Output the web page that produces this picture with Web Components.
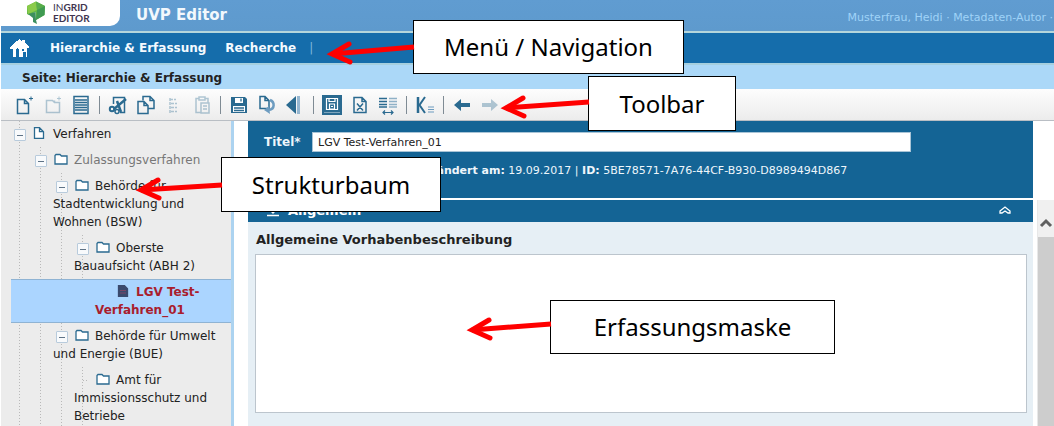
<!DOCTYPE html>
<html lang="de">
<head>
<meta charset="utf-8">
<title>UVP Editor</title>
<style>
  html, body { margin: 0; }
  body { font: 12px/18px "DejaVu Sans", Verdana, sans-serif; color: #222; background: #fff; }
</style>
</head>
<body>
<uvp-app></uvp-app>

<template id="t-app">
  <style>
    :host { display: block; position: relative; box-sizing: border-box; min-height: 100vh; padding-left: 1px; overflow: hidden; }
    .shell { display: flex; flex-direction: column; min-height: 100vh; }
    main { display: flex; flex: 1; }
    tree-panel { flex: none; width: 230px; }
    .splitter { flex: none; width: 14px; border-left: 3px solid #acd3f0; background: #fff; }
    form-panel { flex: 1; min-width: 0; }
    call-out { position: absolute; }
    .c1 { left: 413px; top: 20px; width: 271px; height: 54px; }
    .c2 { left: 588px; top: 76px; width: 148px; height: 55px; }
    .c3 { left: 221px; top: 157px; width: 220px; height: 55px; }
    .c4 { left: 550px; top: 300px; width: 285px; height: 54px; }
  </style>
  <div class="shell">
    <app-header></app-header>
    <main-nav></main-nav>
    <page-title>Seite: Hierarchie &amp; Erfassung</page-title>
    <tool-bar></tool-bar>
    <main>
      <tree-panel>
        <tree-node depth="0" icon="doc" open>Verfahren
          <tree-node slot="kids" depth="1" icon="folder" open muted>Zulassungsverfahren
            <tree-node slot="kids" depth="2" icon="folder" open>Behörde für Stadtentwicklung und Wohnen (BSW)
              <tree-node slot="kids" depth="3" icon="folder" open>Oberste Bauaufsicht (ABH 2)
                <tree-node slot="kids" depth="4" icon="file" selected>LGV Test-Verfahren_01</tree-node>
              </tree-node>
            </tree-node>
            <tree-node slot="kids" depth="2" icon="folder" open>Behörde für Umwelt und Energie (BUE)
              <tree-node slot="kids" depth="3" icon="folder">Amt für Immissionsschutz und Betriebe</tree-node>
            </tree-node>
          </tree-node>
        </tree-node>
      </tree-panel>
      <div class="splitter"></div>
      <form-panel></form-panel>
    </main>
  </div>
  <call-out class="c1" reach="86" from="26" to="33">Menü / Navigation</call-out>
  <call-out class="c2" reach="87" from="25" to="31">Toolbar</call-out>
  <call-out class="c3" reach="85" from="27" to="32">Strukturbaum</call-out>
  <call-out class="c4" reach="83" from="23" to="29">Erfassungsmaske</call-out>
</template>

<template id="t-header">
  <style>
    :host { display: flex; height: 31px; background: linear-gradient(#609cd1, #5e9acd); border-bottom: 2px solid #b4d6dc; }
    .logo { display: flex; flex: none; gap: 7px; box-sizing: border-box; width: 119px; height: 26px; padding-left: 25px; background: #fff; border-bottom-right-radius: 10px; }
    .logo p { margin: 2px 0 0; font: bold 10px/11px Lato, sans-serif; color: #41344f; }
    .logo i { font-style: normal; font-weight: 400; }
    h1 { flex: 1; margin: 0 0 0 16px; font-size: 15px; line-height: 31px; color: #f2f8fd; }
    .user { margin-right: 1px; padding-top: 9px; font-size: 11px; color: #9fd3f8; white-space: nowrap; }
  </style>
  <div class="logo">
    <svg width="20" height="26" viewBox="0 0 20 26" aria-hidden="true">
      <path d="M1 6 10 1.500 19 6 18.500 15 10 20 9.500 12 3 15 1 14Z" fill="#63b946"/>
      <path d="M1 6 10 1.500 11 10 2 14Z" fill="#8acb4a"/>
      <path d="M10 1.500 19 6 11 10Z" fill="#58ad4b"/>
      <path d="M19 6 18.500 15 10 20 11 10Z" fill="#3f9a52"/>
      <path d="M2 14 9.500 12 10 20 11 24 7 22 7 18Z" fill="#3c8f5f"/>
    </svg>
    <p><i>IN</i>GRID<br>EDITOR</p>
  </div>
  <h1>UVP Editor</h1>
  <div class="user">Musterfrau, Heidi · Metadaten-Autor ·</div>
</template>

<template id="t-nav">
  <style>
    :host { display: block; background: #156dab; border-bottom: 2px solid #a5cfdf; }
    nav { display: flex; align-items: center; height: 30px; padding-left: 9px; }
    a { color: #f4faff; font-weight: bold; text-decoration: none; margin-right: 19px; }
    a svg { display: block; }
    span { color: #7fb5dd; margin-left: -6px; }
  </style>
  <nav aria-label="Hauptmenü">
    <a href="#start" aria-label="Startseite"><svg width="21" height="20" viewBox="0 0 21 20" shape-rendering="crispEdges" fill="#fff"><path d="M0 9 7 3 10 1 11 3 13 2 15 2 15 5 19 9 19 10 17 10 17 19 9 19 9 12 7 10 6 12 6 19 3 19 3 11 0 11Z"/><path d="M12 11h2v2h-2zM13 14h3v5h-3z" fill="#156dab"/></svg></a>
    <a href="#hierarchie">Hierarchie &amp; Erfassung</a>
    <a href="#recherche">Recherche</a>
    <span>|</span>
  </nav>
</template>

<template id="t-title">
  <style>
    :host { display: block; height: 24px; padding-left: 21px; background: #abd8f8; color: #222; font-weight: bold; line-height: 26px; }
  </style>
  <slot></slot>
</template>

<template id="t-toolbar">
  <style>
    :host { display: flex; align-items: center; height: 31px; padding-left: 10px; background: linear-gradient(#fdfdfd, #ececec); border-bottom: 1px solid #b9bec4; }
    button { display: grid; place-items: center; flex: none; width: 28px; height: 28px; padding: 0; border: 0; background: none; }
    svg { width: 20px; height: 20px; fill: none; stroke: #2a6a90; stroke-width: 1.5; }
    i { flex: none; width: 1px; height: 18px; margin: 0 4px 0 4px; background: #7f8b94; }
    .off { opacity: .35; }
    .f { fill: #2a6a90; stroke: none; }
    .k { fill: #6d9cc0; stroke: none; }
    .w { fill: #fff; stroke: none; }
  </style>
  <button aria-label="Neu"><svg><path d="M2.500 4.500h7l4 4v10h-11zM9.500 4.500v4h4"/><path d="M14 3.500h4M16 1.500v4" stroke-width="1"/></svg></button>
  <button aria-label="Neuer Ordner" class="off" disabled><svg><path d="M3.500 5.500h6l2 2h5v10h-13zM11.500 5.500v2"/><path d="M14 3.500h4M16 1.500v4" stroke-width="1"/></svg></button>
  <button aria-label="Vorschau"><svg><path d="M3 1.500h14v17H3z"/><path d="M4 5h12M4 7.500h12M4 10h12M4 12.500h12M4 15h12" stroke-width="1.300"/></svg></button>
  <i></i>
  <button aria-label="Ausschneiden"><svg><path d="M5.500 9V2.500h11v15H12"/><path d="M18 4 6 14M9 6l4 11" stroke-width="2.500"/><circle cx="4" cy="14" r="2.200" stroke-width="2"/><circle cx="9" cy="16.500" r="2" stroke-width="1.500"/></svg></button>
  <button aria-label="Kopieren"><svg><path d="M7 5.500V1.500h7l4 4v8h-6M14 1.500v4h4"/><path d="M2 6.500h6l4 4v8H2zM8 6.500v4h4"/></svg></button>
  <button aria-label="Teilbaum kopieren" class="off" disabled><svg><path d="M6 3v15M6 4.500h6M7 8.500h6M7 12.500h6M7 16.500h6" stroke-dasharray="3 1"/></svg></button>
  <button aria-label="Einfügen" class="off" disabled><svg><path d="M7 3.500H4v14h5M13 3.500h3v4M7 2h6v3H7zM9 8h8v10H9zM11 11h4M11 14h4"/></svg></button>
  <i></i>
  <button aria-label="Speichern"><svg><path class="f" d="M2 2h14l2 2v14H2z"/><path class="w" d="M6 3h8v5H6zM4 11h12v6H4z"/><path d="M12 3.500v3M5 13h10M5 15.500h10" stroke-width="1.300"/></svg></button>
  <button aria-label="Rückgängig"><svg><path d="M3 1.500h5l4 4v8H3zM8 1.500v4h4"/><path d="M13 5c5 2 5 9-1 10" stroke="#6d9cc0" stroke-width="2.500"/><path class="k" d="m12 11-5 4 6 4z"/></svg></button>
  <button aria-label="Vergleichen"><svg><path class="f" d="M11 1v18L1 10z"/><path class="k" d="M12 1h3v18h-3z" opacity=".7"/></svg></button>
  <i></i>
  <button aria-label="Freigeben"><svg><path class="f" d="M0 0h20v20H0z"/><path d="M4.500 3.500h11v11h-11zM7 3.500v3h6v-3M7.500 9h5v5h-5zM9 11.500h2" stroke="#fff" stroke-width="1.200"/><path class="w" d="M2 17h16v1H2z" opacity=".4"/></svg></button>
  <button aria-label="Löschen"><svg><path d="M4 2.500h8l4 4v11H4zM12 2.500v4h4M7 8.500l6 7M13 8.500l-6 7"/></svg></button>
  <button aria-label="Änderungen vergleichen"><svg><path d="M1 3.500h8M1 6.500h8M1 9.500h8M1 12h8" stroke-width="1.500"/><path d="M11 3.500h8M11 6.500h8M11 9.500h8M11 12h8" stroke="#8fb1c7"/><path d="M5 17.500h10M7 15.500l-2 2 2 2M13 15.500l2 2-2 2" stroke-width="1.200"/></svg></button>
  <i></i>
  <button aria-label="Kommentar"><svg><path d="M3 2v16" stroke-width="2.500"/><path d="M10 2 4.500 10 10 18" stroke-width="2"/><path d="M13 12h6M13 14.500h6M13 17h6" stroke="#6d9cc0" stroke-width="1.200"/></svg></button>
  <i></i>
  <button aria-label="Zurück"><svg><path class="f" d="M2 10 9 4v4h9v4H9v4z"/></svg></button>
  <button aria-label="Vor" disabled class="off"><svg><path class="f" d="M18 10 11 4v4H2v4h9v4z"/></svg></button>
</template>

<template id="t-tree">
  <style>
    :host { display: block; box-sizing: border-box; padding-left: 10px; background: #ececec; }
  </style>
  <div role="tree"><slot></slot></div>
</template>

<template id="t-node">
  <style>
    :host { display: block; background: repeating-linear-gradient(#b9b9b9 0 1px, transparent 1px 3px) 8px 0 / 1px 100% no-repeat; }
    .row { padding: 4px 12px 4px 0; color: #222; }
    .kids { display: block; padding-left: 21px; }
    .tw { display: inline-block; box-sizing: border-box; width: 12px; height: 12px; margin: 0 7px 0 3px; padding: 0; vertical-align: -2px; border: 1px solid #b8cbdc; border-radius: 1px; background: linear-gradient(#5f7386, #5f7386) center / 6px 1px no-repeat #f8fafc; }
    .leaf { border-color: transparent; background: repeating-linear-gradient(90deg, #b9b9b9 0 1px, transparent 1px 3px) 5px 5px / 100% 1px no-repeat; }
    svg { width: 14px; height: 12px; margin-right: 6px; vertical-align: -1px; fill: #fff; stroke: #2a6a90; stroke-width: 1.3; }
    :host([icon="doc"]) svg { width: 12px; margin-right: 8px; }
    :host([icon="file"]) svg { width: 12px; margin-right: 7px; }
    :host([muted]) .row { color: #777; }
    :host([selected]) { background: none; }
    :host([selected]) .row { position: relative; margin-left: calc(var(--depth) * -21px); padding: 3px 20px 3px calc(var(--depth) * 21px); border: solid #8fb3d3; border-width: 1px 0; background: #abd5ff; color: #a91d2d; font-weight: bold; }
    :host([selected]) .leaf { background: none; }
  </style>
  <div class="row" role="treeitem"><span class="mark"></span><slot></slot></div>
  <div class="kids" role="group"><slot name="kids"></slot></div>
</template>

<template id="t-form">
  <style>
    :host { display: flex; flex-direction: column; background: #fff; }
    .head { margin-right: 21px; padding: 11px 16px 0 16px; height: 66px; background: #146495; color: #eef6fb; }
    .line { display: flex; align-items: center; }
    .line label { flex: none; width: 48px; font-weight: bold; }
    input { box-sizing: border-box; width: 83%; max-width: 599px; height: 20px; padding: 0 5px; border: 1px solid #a9c4d6; background: #fff; font: 11px "DejaVu Sans", sans-serif; color: #222; }
    .meta { margin: 10px 0 0; padding-left: 156px; font-size: 11px; white-space: nowrap; }
    .scroll { display: flex; flex: 1; margin-top: 2px; }
    .body { flex: 1; min-width: 0; background: #e6eff5; }
    .sec { display: flex; align-items: center; height: 22px; padding: 0 22px 0 19px; background: #146495; color: #fff; }
    h2 { flex: 1; margin: 0 0 0 9px; font-size: 13px; }
    .sec svg { fill: none; stroke: #fff; stroke-width: 1.300; }
    .field { padding: 9px 6px 12px 7px; }
    .field label { display: block; margin: 0 0 5px 1px; font-size: 13px; font-weight: bold; }
    textarea { display: block; box-sizing: border-box; width: 100%; height: 159px; border: 1px solid #bcc5cd; resize: none; background: #fff; }
    scroll-bar { flex: none; margin-left: 4px; }
  </style>
  <div class="head">
    <div class="line"><label for="titel">Titel*</label><input id="titel" value="LGV Test-Verfahren_01"></div>
    <p class="meta"><b>Geändert am:</b> 19.09.2017 | <b>ID:</b> 5BE78571-7A76-44CF-B930-D8989494D867</p>
  </div>
  <div class="scroll">
    <div class="body">
      <div class="sec">
        <svg width="12" height="12" viewBox="0 0 12 12" aria-hidden="true"><path d="M6 0v8M3 5l3 3 3-3M0 10.500h12"/></svg>
        <h2>Allgemein</h2>
        <svg width="12" height="10" viewBox="0 0 12 10" aria-hidden="true"><path d="M1 5 6 1l5 4v2H9L6 5 3 7H1z"/></svg>
      </div>
      <div class="field">
        <label for="beschr">Allgemeine Vorhabenbeschreibung</label>
        <textarea id="beschr"></textarea>
      </div>
    </div>
    <scroll-bar></scroll-bar>
  </div>
</template>

<template id="t-scroll">
  <style>
    :host { display: flex; flex-direction: column; width: 16px; border-left: 1px solid #e8e8e8; background: #f0f0f0; }
    button { display: grid; place-items: center; width: 100%; height: 37px; padding: 8px 0 0; border: 0; background: #f0f0f0; }
    div { flex: 1; background: #cdcdcd; }
  </style>
  <button aria-label="Nach oben"><svg width="14" height="10" viewBox="0 0 14 10"><path d="M2 8 7 3l5 5" fill="none" stroke="#606060" stroke-width="3"/></svg></button>
  <div></div>
</template>

<template id="t-callout">
  <style>
    :host { display: grid; place-items: center; box-sizing: border-box; border: 1px solid #000; background: #fff; color: #000; font: 24px/30px "Noto Sans", sans-serif; white-space: nowrap; }
    svg { position: absolute; right: 100%; top: 0; height: 100%; overflow: visible; fill: none; stroke: #f00; stroke-width: 5; }
  </style>
  <svg aria-hidden="true"></svg>
  <span><slot></slot></span>
</template>

<script>
  class Base extends HTMLElement {
    constructor() {
      super();
      this.attachShadow({ mode: "open" }).append(document.getElementById(this.constructor.tpl).content.cloneNode(true));
    }
  }
  const define = (name, tpl) => customElements.define(name, class extends Base { static tpl = tpl; });

  const ICONS = {
    doc: '<svg viewBox="0 0 12 12"><path d="M1.500 .7h5l4 4v6.600h-9zM6.500 .7v4h4"/></svg>',
    folder: '<svg viewBox="0 0 14 12"><path d="M1 2.500 2 1.500h4l1.500 1.500H13v8H1z"/></svg>',
    file: '<svg viewBox="0 0 12 12"><path d="M1.500 .7h6l3 3v7.600h-9z" style="fill:#3a4a6e;stroke:#3a4a6e"/><path d="M3 5.500h6M3 8h6" style="stroke:#7a4566;stroke-width:1"/></svg>'
  };

  customElements.define("tree-node", class extends Base {
    static tpl = "t-node";
    connectedCallback() {
      this.style.setProperty("--depth", this.getAttribute("depth"));
      const twist = this.hasAttribute("open")
        ? '<button class="tw" aria-label="Zuklappen"></button>'
        : '<span class="tw leaf"></span>';
      this.shadowRoot.querySelector(".mark").innerHTML = twist + ICONS[this.getAttribute("icon")];
    }
  });

  customElements.define("call-out", class extends Base {
    static tpl = "t-callout";
    connectedCallback() {
      const [w, a, b] = ["reach", "from", "to"].map(k => Number(this.getAttribute(k)));
      const svg = this.shadowRoot.querySelector("svg");
      svg.style.width = w + "px";
      svg.innerHTML = `<path d="M${w} ${a}L4 ${b}"/><path d="M21 ${b - 10}L4 ${b}L22 ${b + 8}" stroke-linecap="round"/>`;
    }
  });

  define("app-header", "t-header");
  define("main-nav", "t-nav");
  define("page-title", "t-title");
  define("tool-bar", "t-toolbar");
  define("tree-panel", "t-tree");
  define("scroll-bar", "t-scroll");
  define("form-panel", "t-form");
  define("uvp-app", "t-app");
</script>
</body>
</html>
